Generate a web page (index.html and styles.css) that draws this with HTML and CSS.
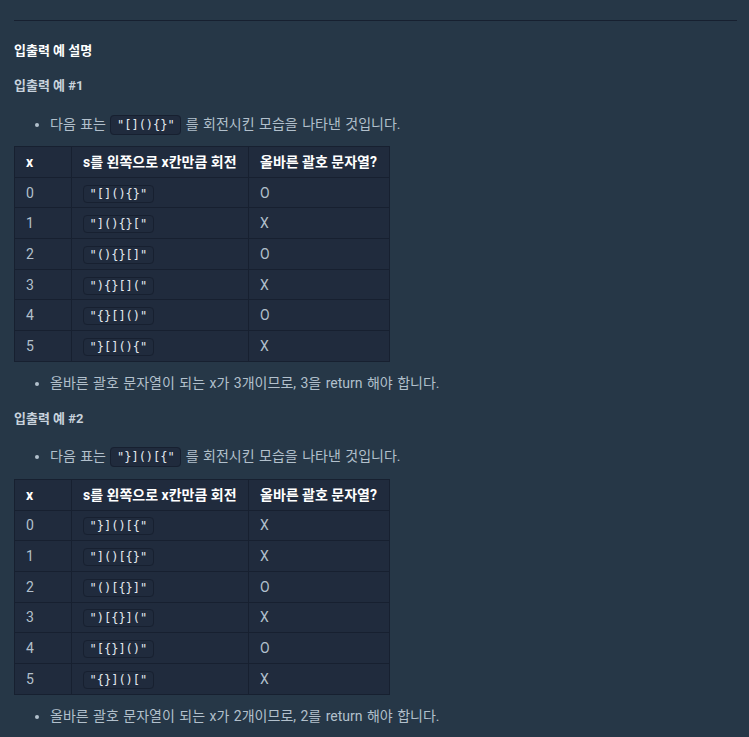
FILE: index.html
```html
<!DOCTYPE html>
<html lang="ko">
<head>
<meta charset="utf-8">
<title>입출력 예 설명</title>
<link rel="stylesheet" href="styles.css">
</head>
<body>
<div class="content">
  <hr class="divider">
  <h5 class="title">입출력 예 설명</h5>
  <p class="sub"><strong>입출력 예 #1</strong></p>
  <ul class="list">
    <li>다음 표는 <code>"[](){}"</code> 를 회전시킨 모습을 나타낸 것입니다.</li>
  </ul>
  <table class="tbl">
    <colgroup><col class="c1"><col class="c2"><col class="c3"></colgroup>
    <thead>
      <tr><th>x</th><th>s를 왼쪽으로 x칸만큼 회전</th><th>올바른 괄호 문자열?</th></tr>
    </thead>
    <tbody>
      <tr><td>0</td><td><code>"[](){}"</code></td><td>O</td></tr>
      <tr><td>1</td><td><code>"](){}["</code></td><td>X</td></tr>
      <tr><td>2</td><td><code>"(){}[]"</code></td><td>O</td></tr>
      <tr><td>3</td><td><code>"){}[]("</code></td><td>X</td></tr>
      <tr><td>4</td><td><code>"{}[]()"</code></td><td>O</td></tr>
      <tr><td>5</td><td><code>"}[](){"</code></td><td>X</td></tr>
    </tbody>
  </table>
  <ul class="list after">
    <li>올바른 괄호 문자열이 되는 x가 3개이므로, 3을 return 해야 합니다.</li>
  </ul>
  <p class="sub"><strong>입출력 예 #2</strong></p>
  <ul class="list second">
    <li>다음 표는 <code>"}]()[{"</code> 를 회전시킨 모습을 나타낸 것입니다.</li>
  </ul>
  <table class="tbl second">
    <colgroup><col class="c1"><col class="c2"><col class="c3"></colgroup>
    <thead>
      <tr><th>x</th><th>s를 왼쪽으로 x칸만큼 회전</th><th>올바른 괄호 문자열?</th></tr>
    </thead>
    <tbody>
      <tr><td>0</td><td><code>"}]()[{"</code></td><td>X</td></tr>
      <tr><td>1</td><td><code>"]()[{}"</code></td><td>X</td></tr>
      <tr><td>2</td><td><code>"()[{}]"</code></td><td>O</td></tr>
      <tr><td>3</td><td><code>")[{}]("</code></td><td>X</td></tr>
      <tr><td>4</td><td><code>"[{}]()"</code></td><td>O</td></tr>
      <tr><td>5</td><td><code>"{}]()["</code></td><td>X</td></tr>
    </tbody>
  </table>
  <ul class="list after">
    <li>올바른 괄호 문자열이 되는 x가 2개이므로, 2를 return 해야 합니다.</li>
  </ul>
</div>
</body>
</html>
```

FILE: styles.css
```css
html, body {
  margin: 0;
  padding: 0;
  background: #263747;
}

body {
  font-family: Roboto, "Noto Sans CJK KR", sans-serif;
  font-size: 14px;
  color: #b2c0cc;
}

.content {
  padding: 20px 12px 20px 14px;
}

.divider {
  margin: 0;
  border: 0;
  border-top: 1px solid #172030;
  height: 0;
}

.title {
  margin: 20px 0 0;
  font-size: 13px;
  line-height: 20px;
  font-weight: 700;
  color: #ffffff;
}

.sub {
  margin: 15px 0 0;
  font-size: 13px;
  line-height: 20px;
  color: #c8d2dc;
}

.sub strong {
  font-weight: 700;
}

.list {
  margin: 17px 0 0;
  padding-left: 36px;
  line-height: 22px;
  word-spacing: 1px;
}

.list li {
  height: 22px;
}

.list.second {
  margin-top: 16px;
}

.list.after {
  margin-top: 10px;
}

code {
  font-family: "DejaVu Sans Mono", monospace;
  font-size: 12px;
  line-height: 14px;
  word-spacing: 0;
  color: #e3e9ef;
  background: #202b3d;
  border: 1px solid #172030;
  border-radius: 4px;
  padding: 2px 5.5px;
}

.tbl {
  margin-top: 11px;
  border-collapse: collapse;
  table-layout: fixed;
  width: 375px;
  background: #202b3d;
  border: 1px solid #172030;
}

.tbl.second {
  margin-top: 12px;
}

.tbl .c1 { width: 57px; }
.tbl .c2 { width: 177px; }
.tbl .c3 { width: 141px; }

.tbl th,
.tbl td {
  border: 1px solid #172030;
  padding: 0 11px;
  height: 29.7px;
  line-height: 18px;
  text-align: left;
  white-space: nowrap;
}

.tbl th {
  font-size: 14px;
  font-weight: 700;
  color: #ffffff;
}

.tbl td {
  color: #b2c0cc;
}

.tbl td code {
  padding: 1px 5.5px;
}
```
